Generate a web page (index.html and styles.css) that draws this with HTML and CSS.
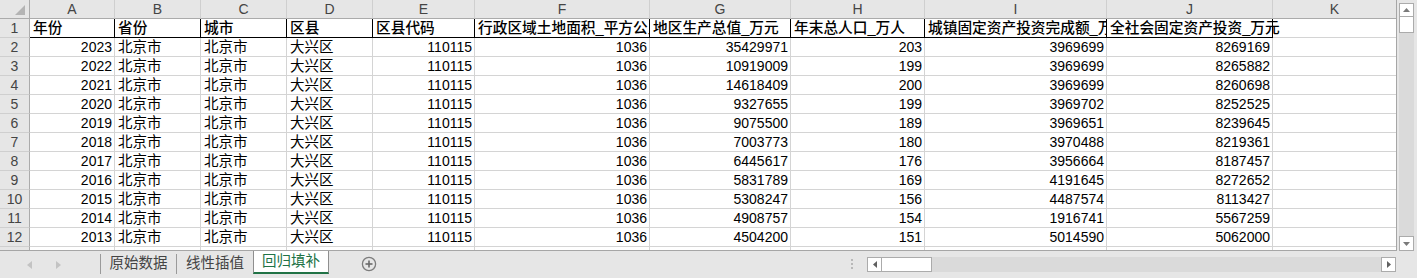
FILE: index.html
```html
<!DOCTYPE html>
<html lang="zh-CN">
<head>
    <meta charset="UTF-8">
    <title>回归填补 - 工作表</title>
    <link rel="stylesheet" href="styles.css">
</head>
<body>
    <div class="sheet">
        <div class="grid">
            <div class="row col-head">
                <div class="corner">
                    <svg width="11" height="11" viewBox="0 0 11 11"><polygon points="10,0 10,10 0,10" fill="#b4b4b4"/></svg>
                </div>
                <div>A</div><div>B</div><div>C</div><div>D</div><div>E</div><div>F</div><div>G</div><div>H</div><div>I</div><div>J</div><div>K</div>
            </div>

            <div class="row head-row">
                <div class="rh">1</div>
                <div class="hd">年份</div>
                <div class="hd">省份</div>
                <div class="hd">城市</div>
                <div class="hd">区县</div>
                <div class="hd">区县代码</div>
                <div class="hd">行政区域土地面积_平方公里</div>
                <div class="hd">地区生产总值_万元</div>
                <div class="hd">年末总人口_万人</div>
                <div class="hd">城镇固定资产投资完成额_万元</div>
                <div class="hd spill">全社会固定资产投资_万元</div>
                <div></div>
            </div>

            <div class="row"><div class="rh">2</div><div class="num">2023</div><div>北京市</div><div>北京市</div><div>大兴区</div><div class="num">110115</div><div class="num">1036</div><div class="num">35429971</div><div class="num">203</div><div class="num">3969699</div><div class="num">8269169</div><div></div></div>
            <div class="row"><div class="rh">3</div><div class="num">2022</div><div>北京市</div><div>北京市</div><div>大兴区</div><div class="num">110115</div><div class="num">1036</div><div class="num">10919009</div><div class="num">199</div><div class="num">3969699</div><div class="num">8265882</div><div></div></div>
            <div class="row"><div class="rh">4</div><div class="num">2021</div><div>北京市</div><div>北京市</div><div>大兴区</div><div class="num">110115</div><div class="num">1036</div><div class="num">14618409</div><div class="num">200</div><div class="num">3969699</div><div class="num">8260698</div><div></div></div>
            <div class="row"><div class="rh">5</div><div class="num">2020</div><div>北京市</div><div>北京市</div><div>大兴区</div><div class="num">110115</div><div class="num">1036</div><div class="num">9327655</div><div class="num">199</div><div class="num">3969702</div><div class="num">8252525</div><div></div></div>
            <div class="row"><div class="rh">6</div><div class="num">2019</div><div>北京市</div><div>北京市</div><div>大兴区</div><div class="num">110115</div><div class="num">1036</div><div class="num">9075500</div><div class="num">189</div><div class="num">3969651</div><div class="num">8239645</div><div></div></div>
            <div class="row"><div class="rh">7</div><div class="num">2018</div><div>北京市</div><div>北京市</div><div>大兴区</div><div class="num">110115</div><div class="num">1036</div><div class="num">7003773</div><div class="num">180</div><div class="num">3970488</div><div class="num">8219361</div><div></div></div>
            <div class="row"><div class="rh">8</div><div class="num">2017</div><div>北京市</div><div>北京市</div><div>大兴区</div><div class="num">110115</div><div class="num">1036</div><div class="num">6445617</div><div class="num">176</div><div class="num">3956664</div><div class="num">8187457</div><div></div></div>
            <div class="row"><div class="rh">9</div><div class="num">2016</div><div>北京市</div><div>北京市</div><div>大兴区</div><div class="num">110115</div><div class="num">1036</div><div class="num">5831789</div><div class="num">169</div><div class="num">4191645</div><div class="num">8272652</div><div></div></div>
            <div class="row"><div class="rh">10</div><div class="num">2015</div><div>北京市</div><div>北京市</div><div>大兴区</div><div class="num">110115</div><div class="num">1036</div><div class="num">5308247</div><div class="num">156</div><div class="num">4487574</div><div class="num">8113427</div><div></div></div>
            <div class="row"><div class="rh">11</div><div class="num">2014</div><div>北京市</div><div>北京市</div><div>大兴区</div><div class="num">110115</div><div class="num">1036</div><div class="num">4908757</div><div class="num">154</div><div class="num">1916741</div><div class="num">5567259</div><div></div></div>
            <div class="row"><div class="rh">12</div><div class="num">2013</div><div>北京市</div><div>北京市</div><div>大兴区</div><div class="num">110115</div><div class="num">1036</div><div class="num">4504200</div><div class="num">151</div><div class="num">5014590</div><div class="num">5062000</div><div></div></div>
            <div class="row"><div class="rh"></div><div></div><div></div><div></div><div></div><div></div><div></div><div></div><div></div><div></div><div></div><div></div></div>
        </div>

        <div class="vscroll">
            <div class="track">
                <div class="sb-btn">
                    <svg width="7" height="4" viewBox="0 0 7 4"><polygon points="0,4 7,4 3.5,0" fill="#7a7a7a"/></svg>
                </div>
                <div class="sb-thumb v"></div>
                <div class="fill"></div>
                <div class="sb-btn down">
                    <svg width="7" height="4" viewBox="0 0 7 4"><polygon points="0,0 7,0 3.5,4" fill="#7a7a7a"/></svg>
                </div>
            </div>
        </div>
    </div>

    <div class="tabbar">
        <div class="tab-nav">
            <svg width="5" height="8" viewBox="0 0 5 8"><polygon points="5,0 5,8 0,4" fill="#c3c3c3"/></svg>
            <svg width="5" height="8" viewBox="0 0 5 8"><polygon points="0,0 0,8 5,4" fill="#c3c3c3"/></svg>
        </div>
        <div class="tab">原始数据</div>
        <div class="tab wide">线性插值</div>
        <div class="tab active">回归填补</div>
        <div class="add-sheet">
            <svg width="16" height="16" viewBox="0 0 16 16">
                <circle cx="8" cy="8" r="6.6" fill="none" stroke="#7c7c7c" stroke-width="1.3"/>
                <line x1="8" y1="4.5" x2="8" y2="11.5" stroke="#6a6a6a" stroke-width="1.6"/>
                <line x1="4.5" y1="8" x2="11.5" y2="8" stroke="#6a6a6a" stroke-width="1.6"/>
            </svg>
        </div>
        <div class="spacer"></div>
        <div class="splitter"><span></span><span></span><span></span></div>
        <div class="hscroll">
            <div class="sb-btn">
                <svg width="4" height="7" viewBox="0 0 4 7"><polygon points="4,0 4,7 0,3.5" fill="#606060"/></svg>
            </div>
            <div class="sb-thumb h"></div>
            <div class="fill"></div>
            <div class="sb-btn">
                <svg width="4" height="7" viewBox="0 0 4 7"><polygon points="0,0 0,7 4,3.5" fill="#606060"/></svg>
            </div>
        </div>
    </div>
</body>
</html>
```

FILE: styles.css
```css
:root {
    --chrome: #e6e6e6;
    --track: #dadada;
    --grid-line: #d4d4d4;
    --head-line: #ababab;
    --frame: #a6a6a6;
    --head-text: #444444;
    --excel-green: #217346;
    --cols: 30px 85px 86px 86px 86px 102px 175px 141px 134px 182px 166px 123px;
}

* {
    margin: 0;
    padding: 0;
    box-sizing: border-box;
}

body {
    font-family: "Liberation Sans", "Noto Sans CJK SC", sans-serif;
    font-size: 14.5px;
    color: #000;
    background-color: var(--chrome);
    width: 1417px;
    height: 278px;
    overflow: hidden;
}

.sheet {
    display: flex;
    height: 251px;
}

.grid {
    width: 1397px;
    height: 251px;
    background-color: #fff;
    border-right: 1px solid var(--frame);
    border-bottom: 1px solid var(--frame);
    overflow: hidden;
}

.row {
    display: grid;
    grid-template-columns: var(--cols);
    height: 19px;
}

.row > div {
    height: 19px;
    line-height: 18px;
    padding: 0 3px;
    border-right: 1px solid var(--grid-line);
    border-bottom: 1px solid var(--grid-line);
    white-space: nowrap;
    overflow: hidden;
}

.row > div:last-child {
    border-right: none;
}

.num {
    text-align: right;
    font-size: 14px;
    padding-right: 2px !important;
}

/* column letters */
.col-head > div {
    background-color: var(--chrome);
    color: var(--head-text);
    text-align: center;
    font-size: 14px;
    border-bottom-color: var(--head-line);
    border-right-color: #cfcfcf;
}

.col-head > .corner {
    display: flex;
    justify-content: flex-end;
    align-items: flex-end;
    padding: 0 3px 2px 0;
    border-right-color: var(--head-line);
}

/* row numbers */
.rh {
    background-color: var(--chrome);
    color: var(--head-text);
    text-align: center;
    font-size: 14px;
    border-right-color: var(--head-line) !important;
    border-bottom-color: #cfcfcf !important;
    padding: 0 !important;
}

.head-row .hd {
    font-weight: 500;
    font-size: 14.7px;
    border-right-color: #000;
    border-bottom-color: #000;
}

.head-row .spill {
    overflow: visible;
    position: relative;
    z-index: 1;
}

/* vertical scrollbar */
.vscroll {
    flex: 1;
    padding: 3px 0 0 2px;
}

.track {
    width: 15px;
    height: 248px;
    background-color: var(--track);
    display: flex;
    flex-direction: column;
}

.sb-btn {
    width: 15px;
    height: 14px;
    background-color: #fff;
    border: 1px solid var(--head-line);
    display: flex;
    align-items: center;
    justify-content: center;
}

.sb-btn.down {
    height: 15px;
}

.sb-thumb {
    background-color: #fff;
    border: 1px solid var(--head-line);
}

.sb-thumb.v {
    height: 17px;
    margin-top: -1px;
}

.fill {
    flex: 1;
}

/* sheet tabs */
.tabbar {
    display: flex;
    height: 27px;
}

.tab-nav {
    width: 100px;
    display: flex;
    align-items: center;
    gap: 24px;
    padding-left: 27px;
}

.tab {
    width: 76px;
    height: 20px;
    margin-top: 3px;
    line-height: 18px;
    text-align: center;
    color: var(--head-text);
    border-left: 1px solid #9a9a9a;
}

.tab.wide {
    width: 77px;
}

.tab.active {
    width: 76px;
    height: 23px;
    margin-top: 0;
    line-height: 21px;
    background-color: #fff;
    color: var(--excel-green);
    border-left: 1px solid #8f8f8f;
    border-right: 1px solid #8f8f8f;
    border-bottom: 2px solid var(--excel-green);
}

.add-sheet {
    margin-left: 32px;
    display: flex;
    align-items: center;
    padding-bottom: 1px;
}

.spacer {
    flex: 1;
}

.splitter {
    width: 22px;
    display: flex;
    flex-direction: column;
    gap: 2px;
    padding: 8px 0 0 6px;
}

.splitter span {
    width: 2px;
    height: 2px;
    background-color: #b8b8b8;
}

.hscroll {
    width: 529px;
    height: 15px;
    margin-top: 6px;
    margin-right: 21px;
    background-color: var(--track);
    display: flex;
}

.hscroll .sb-btn {
    height: 15px;
}

.sb-thumb.h {
    width: 51px;
    margin-left: -1px;
}
```
